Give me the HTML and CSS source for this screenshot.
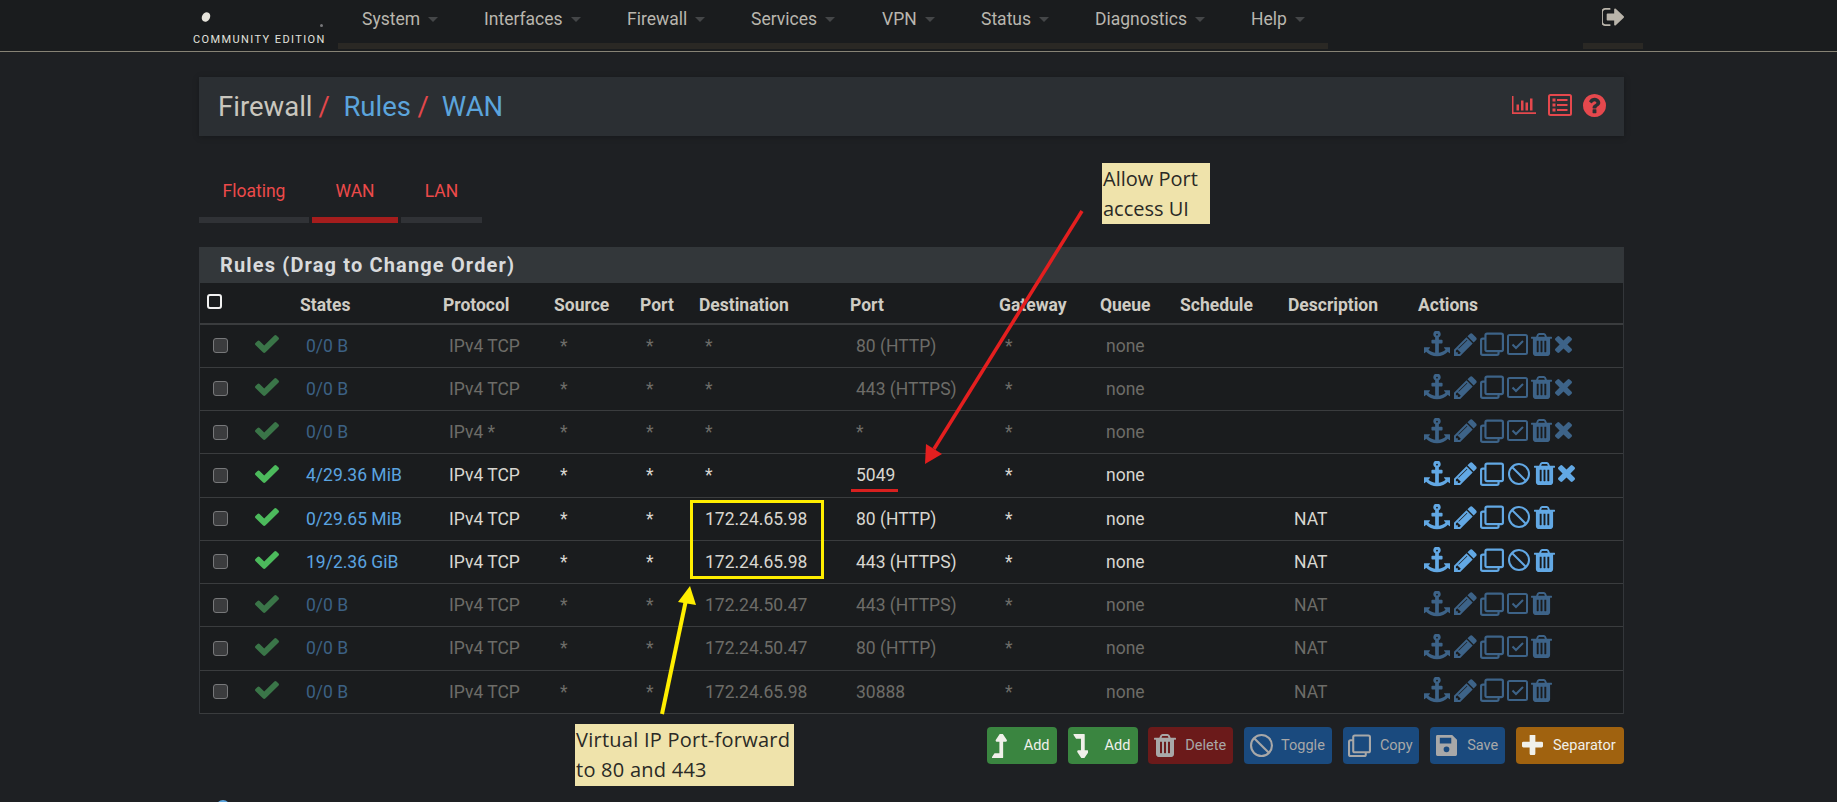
FILE: index.html
```html
<!DOCTYPE html>
<html lang="en">
<head>
<meta charset="utf-8">
<title>Firewall / Rules / WAN</title>
<link rel="stylesheet" href="styles.css">
</head>
<body>
<svg class="defs" width="0" height="0" aria-hidden="true">
  <symbol id="i-check" viewBox="121 334 1550 1188" preserveAspectRatio="none"><path d="M1671 566q0 40-28 68l-724 724-136 136q-28 28-68 28t-68-28l-136-136-362-362q-28-28-28-68t28-68l136-136q28-28 68-28t68 28l294 295 656-657q28-28 68-28t68 28l136 136q28 28 28 68z"/></symbol>
  <symbol id="i-anchor" viewBox="0 0 1792 1792"><path d="M960 256q0-26-19-45t-45-19-45 19-19 45 19 45 45 19 45-19 19-45zm832 888v352q0 22-20 30-8 2-12 2-12 0-23-9l-93-93q-119 143-318.500 226.500t-429.500 83.500-429.500-83.500-318.500-226.500l-93 93q-9 9-23 9-4 0-12-2-20-8-20-30v-352q0-14 9-23t23-9h352q22 0 30 20 8 19-7 35l-100 100q67 91 189.500 153.500t271.500 82.500v-647h-192q-26 0-45-19t-19-45v-128q0-26 19-45t45-19h192v-163q-58-34-93-92.500t-35-128.500q0-106 75-181t181-75 181 75 75 181q0 70-35 128.500t-93 92.500v163h192q26 0 45 19t19 45v128q0 26-19 45t-45 19h-192v647q149-20 271.500-82.500t189.500-153.500l-100-100q-15-16-7-35 8-20 30-20h352q14 0 23 9t9 23z"/></symbol>
  <symbol id="i-pencil" viewBox="128 128 1536 1536"><path d="M491 1536l91-91-235-235-91 91v107h128v128h107zm523-928q0-22-22-22-10 0-17 7l-542 542q-7 7-7 17 0 22 22 22 10 0 17-7l542-542q7-7 7-17zm-54-192l416 416-832 832h-416v-416zm683 96q0 53-37 90l-166 166-416-416 166-165q36-38 90-38 53 0 91 38l235 234q37 39 37 91z"/></symbol>
  <symbol id="i-clone" viewBox="1 1 22 22"><path class="ln" d="M7.500 2.500h13a1.500 1.500 0 0 1 1.500 1.500v13a1.500 1.500 0 0 1-1.500 1.500h-13a1.500 1.500 0 0 1-1.500-1.500v-13a1.500 1.500 0 0 1 1.500-1.500z"/><path class="ln" d="M6 7h-2.500a1.500 1.500 0 0 0-1.500 1.500v12a1.500 1.500 0 0 0 1.500 1.500h13a1.500 1.500 0 0 0 1.500-1.500v-2"/></symbol>
  <symbol id="i-checkbox" viewBox="1.500 2.500 21 21"><rect class="ln" x="2.500" y="3.500" width="19" height="19" rx="1.500"/><path class="ln" d="M7 13l3.500 3.500 7-7"/></symbol>
  <symbol id="i-trash" viewBox="192 128 1408 1536" preserveAspectRatio="none"><path d="M704 1376v-704q0-14-9-23t-23-9h-64q-14 0-23 9t-9 23v704q0 14 9 23t23 9h64q14 0 23-9t9-23zm256 0v-704q0-14-9-23t-23-9h-64q-14 0-23 9t-9 23v704q0 14 9 23t23 9h64q14 0 23-9t9-23zm256 0v-704q0-14-9-23t-23-9h-64q-14 0-23 9t-9 23v704q0 14 9 23t23 9h64q14 0 23-9t9-23zm-544-992h448l-48-117q-7-9-17-11h-317q-10 2-17 11zm928 32v64q0 14-9 23t-23 9h-96v948q0 83-47 143.500t-113 60.500h-832q-66 0-113-58.500t-47-141.500v-952h-96q-14 0-23-9t-9-23v-64q0-14 9-23t23-9h309l70-167q15-37 54-63t79-26h320q40 0 79 26t54 63l70 167h309q14 0 23 9t9 23z"/></symbol>
  <symbol id="i-times" viewBox="302 366 1188 1188"><path d="M1490 1322q0 40-28 68l-136 136q-28 28-68 28t-68-28l-294-294-294 294q-28 28-68 28t-68-28l-136-136q-28-28-28-68t28-68l294-294-294-294q-28-28-28-68t28-68l136-136q28-28 68-28t68 28l294 294 294-294q28-28 68-28t68 28l136 136q28 28 28 68t-28 68l-294 294 294 294q28 28 28 68z"/></symbol>
  <symbol id="i-ban" viewBox="1 1 22 22"><circle class="ln" cx="12" cy="12" r="10"/><path class="ln" d="M5 5l14 14"/></symbol>
  <symbol id="i-plus" viewBox="192 192 1408 1408"><path d="M1600 736v192q0 40-28 68t-68 28h-416v416q0 40-28 68t-68 28h-192q-40 0-68-28t-28-68v-416h-416q-40 0-68-28t-28-68v-192q0-40 28-68t68-28h416v-416q0-40 28-68t68-28h192q40 0 68 28t28 68v416h416q40 0 68 28t28 68z"/></symbol>
  <symbol id="i-up" viewBox="384 125 1024 1315" preserveAspectRatio="none"><path d="M1395 508q-18 36-58 36h-192v864q0 14-9 23t-23 9h-704q-21 0-29-18-8-20 4-35l160-192q9-11 25-11h320v-640h-192q-40 0-58-36-17-37 9-68l320-384q18-22 49-22t49 22l320 384q27 32 9 68z"/></symbol>
  <symbol id="i-down" viewBox="384 160 1024 1315" preserveAspectRatio="none"><path d="M448 160h704q14 0 23 9t9 23v864h192q40 0 58 37t-9 68l-320 384q-18 22-49 22t-49-22l-320-384q-26-31-9-68 18-37 58-37h192v-640h-320q-14 0-25-11l-160-192q-13-14-4-34 9-19 29-19z"/></symbol>
  <symbol id="i-save" viewBox="1 1 22 22"><path fill-rule="evenodd" d="M3 1h15l5 5v15.500a1.500 1.500 0 0 1-1.500 1.500h-19a1.500 1.500 0 0 1-1.500-1.500v-19a1.500 1.500 0 0 1 1.500-1.500zm2 3v6h12v-6zm7 9a3 3 0 1 0 0 6 3 3 0 0 0 0-6z"/></symbol>
  <symbol id="i-chart" viewBox="0 0 24 18"><path d="M0 0h1.500v16.300h22.500v1.700h-24zM4.500 8.500h2.500v6h-2.500zM9 4.500h2.500v10h-2.500zM13.500 6.500h2.500v8h-2.500zM18 2.500h2.500v12h-2.500z"/></symbol>
  <symbol id="i-list" viewBox="0 0 24 22"><rect class="ln" x="1" y="1" width="22" height="20" rx="1.500"/><path d="M4.500 4.500h3v3h-3zM4.500 9.500h3v3h-3zM4.500 14.500h3v3h-3zM9 5h10.500v2h-10.500zM9 10h10.500v2h-10.500zM9 15h10.500v2h-10.500z"/></symbol>
  <symbol id="i-help" viewBox="128 128 1536 1536"><path d="M1024 1376v-192q0-14-9-23t-23-9h-192q-14 0-23 9t-9 23v192q0 14 9 23t23 9h192q14 0 23-9t9-23zm256-672q0-88-55.500-163t-138.500-116-170-41q-243 0-371 213-15 24 8 42l132 100q7 6 19 6 16 0 25-12 53-68 86-92 34-24 86-24 48 0 85.500 26t37.500 59q0 38-20 61t-68 45q-63 28-115.500 86.500t-52.500 125.500v36q0 14 9 23t23 9h192q14 0 23-9t9-23q0-19 21.500-49.500t54.500-49.500q32-18 49-28.500t46-35 44.500-48 28-60.500 12.500-81zm384 192q0 209-103 385.500t-279.500 279.500-385.500 103-385.500-103-279.500-279.500-103-385.500 103-385.500 279.500-279.500 385.500-103 385.500 103 279.500 279.500 103 385.500z"/></symbol>
  <symbol id="i-out" viewBox="128 256 1504 1280" preserveAspectRatio="none"><path d="M704 1440q0 4 1 20t.5 26.500-3 23.500-10 19.500-20.500 6.500h-320q-119 0-203.500-84.500t-84.500-203.500v-704q0-119 84.500-203.500t203.500-84.500h320q13 0 22.500 9.500t9.500 22.500q0 4 1 20t.5 26.500-3 23.500-10 19.500-20.500 6.500h-320q-66 0-113 47t-47 113v704q0 66 47 113t113 47h312l11.500 1 11.500 3 8 5.500 7 9 2 13.500zm928-544q0 26-19 45l-544 544q-19 19-45 19t-45-19-19-45v-288h-448q-26 0-45-19t-19-45v-384q0-26 19-45t45-19h448v-288q0-26 19-45t45-19 45 19l544 544q19 19 19 45z"/></symbol>
</svg>

<header class="navbar">
  <div class="brand">
    <span class="brand-mark"><span class="brand-dot"></span><span class="brand-speck"></span></span>
    <span class="brand-text">COMMUNITY EDITION</span>
  </div>
  <div class="nav-main">
    <nav class="nav-items">
      <a class="nav-item w-system">System<i class="caret"></i></a>
      <a class="nav-item w-interfaces">Interfaces<i class="caret"></i></a>
      <a class="nav-item w-firewall">Firewall<i class="caret"></i></a>
      <a class="nav-item w-services">Services<i class="caret"></i></a>
      <a class="nav-item w-vpn">VPN<i class="caret"></i></a>
      <a class="nav-item w-status">Status<i class="caret"></i></a>
      <a class="nav-item w-diagnostics">Diagnostics<i class="caret"></i></a>
      <a class="nav-item w-help">Help<i class="caret"></i></a>
    </nav>
  </div>
  <div class="nav-right"><svg class="logout"><use href="#i-out"/></svg></div>
</header>

<main class="page">
  <div class="crumbs">
    <h1 class="crumb-title"><span>Firewall</span><em>/</em><a>Rules</a><em>/</em><a>WAN</a></h1>
    <div class="crumb-icons">
      <svg class="ci-chart"><use href="#i-chart"/></svg>
      <svg class="ci-list"><use href="#i-list"/></svg>
      <svg class="ci-help"><use href="#i-help"/></svg>
    </div>
  </div>

  <div class="tabs">
    <a class="tab w-floating">Floating</a>
    <a class="tab tab-active w-wan">WAN</a>
    <a class="tab w-lan">LAN</a>
  </div>

  <section class="panel">
    <h2 class="panel-title">Rules (Drag to Change Order)</h2>
    <table class="rules">
      <colgroup>
        <col class="c-sel"><col class="c-ok"><col class="c-states"><col class="c-proto"><col class="c-src"><col class="c-sport"><col class="c-dest"><col class="c-dport"><col class="c-gw"><col class="c-queue"><col class="c-sched"><col class="c-desc"><col class="c-act">
      </colgroup>
      <thead>
        <tr>
          <th><span class="box box-head"></span></th><th></th><th>States</th><th>Protocol</th><th>Source</th><th>Port</th><th>Destination</th><th>Port</th><th>Gateway</th><th>Queue</th><th>Schedule</th><th>Description</th><th>Actions</th>
        </tr>
      </thead>
      <tbody>
        <tr class="off"><td><span class="box"></span></td><td><svg class="ok"><use href="#i-check"/></svg></td><td class="st">0/0 B</td><td>IPv4 TCP</td><td>*</td><td>*</td><td>*</td><td>80 (HTTP)</td><td>*</td><td>none</td><td></td><td></td><td><div class="acts"><svg class="a-anchor"><use href="#i-anchor"/></svg><svg class="a-pencil"><use href="#i-pencil"/></svg><svg class="a-clone"><use href="#i-clone"/></svg><svg class="a-box"><use href="#i-checkbox"/></svg><svg class="a-trash"><use href="#i-trash"/></svg><svg class="a-times"><use href="#i-times"/></svg></div></td></tr>
        <tr class="off"><td><span class="box"></span></td><td><svg class="ok"><use href="#i-check"/></svg></td><td class="st">0/0 B</td><td>IPv4 TCP</td><td>*</td><td>*</td><td>*</td><td>443 (HTTPS)</td><td>*</td><td>none</td><td></td><td></td><td><div class="acts"><svg class="a-anchor"><use href="#i-anchor"/></svg><svg class="a-pencil"><use href="#i-pencil"/></svg><svg class="a-clone"><use href="#i-clone"/></svg><svg class="a-box"><use href="#i-checkbox"/></svg><svg class="a-trash"><use href="#i-trash"/></svg><svg class="a-times"><use href="#i-times"/></svg></div></td></tr>
        <tr class="off"><td><span class="box"></span></td><td><svg class="ok"><use href="#i-check"/></svg></td><td class="st">0/0 B</td><td>IPv4 *</td><td>*</td><td>*</td><td>*</td><td>*</td><td>*</td><td>none</td><td></td><td></td><td><div class="acts"><svg class="a-anchor"><use href="#i-anchor"/></svg><svg class="a-pencil"><use href="#i-pencil"/></svg><svg class="a-clone"><use href="#i-clone"/></svg><svg class="a-box"><use href="#i-checkbox"/></svg><svg class="a-trash"><use href="#i-trash"/></svg><svg class="a-times"><use href="#i-times"/></svg></div></td></tr>
        <tr><td><span class="box"></span></td><td><svg class="ok"><use href="#i-check"/></svg></td><td class="st">4/29.36 MiB</td><td>IPv4 TCP</td><td>*</td><td>*</td><td>*</td><td>5049</td><td>*</td><td>none</td><td></td><td></td><td><div class="acts"><svg class="a-anchor"><use href="#i-anchor"/></svg><svg class="a-pencil"><use href="#i-pencil"/></svg><svg class="a-clone"><use href="#i-clone"/></svg><svg class="a-ban"><use href="#i-ban"/></svg><svg class="a-trash"><use href="#i-trash"/></svg><svg class="a-times"><use href="#i-times"/></svg></div></td></tr>
        <tr><td><span class="box"></span></td><td><svg class="ok"><use href="#i-check"/></svg></td><td class="st">0/29.65 MiB</td><td>IPv4 TCP</td><td>*</td><td>*</td><td>172.24.65.98</td><td>80 (HTTP)</td><td>*</td><td>none</td><td></td><td>NAT</td><td><div class="acts"><svg class="a-anchor"><use href="#i-anchor"/></svg><svg class="a-pencil"><use href="#i-pencil"/></svg><svg class="a-clone"><use href="#i-clone"/></svg><svg class="a-ban"><use href="#i-ban"/></svg><svg class="a-trash"><use href="#i-trash"/></svg></div></td></tr>
        <tr><td><span class="box"></span></td><td><svg class="ok"><use href="#i-check"/></svg></td><td class="st">19/2.36 GiB</td><td>IPv4 TCP</td><td>*</td><td>*</td><td>172.24.65.98</td><td>443 (HTTPS)</td><td>*</td><td>none</td><td></td><td>NAT</td><td><div class="acts"><svg class="a-anchor"><use href="#i-anchor"/></svg><svg class="a-pencil"><use href="#i-pencil"/></svg><svg class="a-clone"><use href="#i-clone"/></svg><svg class="a-ban"><use href="#i-ban"/></svg><svg class="a-trash"><use href="#i-trash"/></svg></div></td></tr>
        <tr class="off"><td><span class="box"></span></td><td><svg class="ok"><use href="#i-check"/></svg></td><td class="st">0/0 B</td><td>IPv4 TCP</td><td>*</td><td>*</td><td>172.24.50.47</td><td>443 (HTTPS)</td><td>*</td><td>none</td><td></td><td>NAT</td><td><div class="acts"><svg class="a-anchor"><use href="#i-anchor"/></svg><svg class="a-pencil"><use href="#i-pencil"/></svg><svg class="a-clone"><use href="#i-clone"/></svg><svg class="a-box"><use href="#i-checkbox"/></svg><svg class="a-trash"><use href="#i-trash"/></svg></div></td></tr>
        <tr class="off"><td><span class="box"></span></td><td><svg class="ok"><use href="#i-check"/></svg></td><td class="st">0/0 B</td><td>IPv4 TCP</td><td>*</td><td>*</td><td>172.24.50.47</td><td>80 (HTTP)</td><td>*</td><td>none</td><td></td><td>NAT</td><td><div class="acts"><svg class="a-anchor"><use href="#i-anchor"/></svg><svg class="a-pencil"><use href="#i-pencil"/></svg><svg class="a-clone"><use href="#i-clone"/></svg><svg class="a-box"><use href="#i-checkbox"/></svg><svg class="a-trash"><use href="#i-trash"/></svg></div></td></tr>
        <tr class="off"><td><span class="box"></span></td><td><svg class="ok"><use href="#i-check"/></svg></td><td class="st">0/0 B</td><td>IPv4 TCP</td><td>*</td><td>*</td><td>172.24.65.98</td><td>30888</td><td>*</td><td>none</td><td></td><td>NAT</td><td><div class="acts"><svg class="a-anchor"><use href="#i-anchor"/></svg><svg class="a-pencil"><use href="#i-pencil"/></svg><svg class="a-clone"><use href="#i-clone"/></svg><svg class="a-box"><use href="#i-checkbox"/></svg><svg class="a-trash"><use href="#i-trash"/></svg></div></td></tr>
      </tbody>
    </table>
  </section>

  <div class="buttons">
    <a class="btn btn-green w-add"><span class="ico"><svg class="bi-up"><use href="#i-up"/></svg></span>Add</a>
    <a class="btn btn-green w-add"><span class="ico"><svg class="bi-up"><use href="#i-down"/></svg></span>Add</a>
    <a class="btn btn-red dim w-del"><span class="ico"><svg class="bi-trash"><use href="#i-trash"/></svg></span>Delete</a>
    <a class="btn btn-blue dim w-tog"><span class="ico"><svg class="bi-ban"><use href="#i-ban"/></svg></span>Toggle</a>
    <a class="btn btn-blue dim w-cop"><span class="ico"><svg class="bi-clone"><use href="#i-clone"/></svg></span>Copy</a>
    <a class="btn btn-blue dim w-sav"><span class="ico"><svg class="bi-save"><use href="#i-save"/></svg></span>Save</a>
    <a class="btn btn-orange w-sep"><span class="ico"><svg class="bi-save"><use href="#i-plus"/></svg></span>Separator</a>
  </div>

  <div class="info-peek"></div>
</main>

<div class="note note-port">Allow Port<br>access UI</div>
<div class="note note-vip">Virtual IP Port-forward<br>to 80 and 443</div>
<div class="mark-box"></div>
<div class="mark-line"></div>
<svg class="overlay" width="1837" height="802" aria-hidden="true">
  <line x1="1082" y1="211" x2="934" y2="449" stroke="#e41f1f" stroke-width="3.500"/>
  <polygon points="925,464 926,444 942,454" fill="#e41f1f"/>
  <line x1="662" y1="714" x2="686" y2="600" stroke="#ffee00" stroke-width="4"/>
  <polygon points="690,586 678,602 696,605" fill="#ffee00"/>
</svg>
</body>
</html>
```
FILE: styles.css
```css
* { box-sizing: border-box; }
html, body { margin: 0; padding: 0; }
body {
  position: relative;
  width: 1837px;
  height: 802px;
  overflow: hidden;
  background: #1e2023;
  color: #d4d2cc;
  font-family: Roboto, "Liberation Sans", sans-serif;
  font-size: 17.5px;
}
.defs { position: absolute; }
.ln { fill: none; stroke: currentColor; stroke-width: 2; }

/* navbar */
.navbar {
  display: flex;
  height: 52px;
  background: #1a1c1e;
  border-bottom: 1px solid #878375;
  padding-left: 193px;
}
.brand { width: 145px; position: relative; height: 51px; }
.brand-mark { display: block; height: 33px; position: relative; }
.brand-dot {
  position: absolute; left: 9px; top: 12px; width: 8px; height: 10px;
  background: #e6e4dc; border-radius: 50%; transform: rotate(30deg);
}
.brand-speck {
  position: absolute; left: 127px; top: 24px; width: 3px; height: 3px;
  background: #77777a; border-radius: 50%;
}
.brand-text {
  display: block; font-size: 11px; letter-spacing: 1.400px; line-height: 13px;
  color: #e2e2de; white-space: nowrap;
}
.nav-main { width: 990px; height: 49px; border-bottom: 6px solid #2a2824; }
.nav-items { display: flex; height: 43px; padding-left: 24px; }
.nav-item {
  display: flex; align-items: center; height: 38px;
  font-size: 17.5px; color: #b9b6ae; white-space: nowrap;
}
.caret {
  display: inline-block; margin-left: 8px; margin-top: 1px;
  border-left: 5px solid transparent; border-right: 5px solid transparent;
  border-top: 5px solid #444648;
}
.w-system { width: 122px; }
.w-interfaces { width: 143px; }
.w-firewall { width: 124px; }
.w-services { width: 131px; }
.w-vpn { width: 99px; }
.w-status { width: 114px; }
.w-diagnostics { width: 156px; }
.nav-right {
  width: 60px; height: 49px; margin-left: 255px; border-bottom: 6px solid #2a2824;
  display: flex; justify-content: center;
}
.logout { width: 22px; height: 18px; margin-top: 8px; fill: #b9b4aa; }

/* page */
.page { padding: 25px 213px 0 199px; }
.crumbs {
  display: flex; align-items: center; justify-content: space-between;
  height: 59px; padding: 0 18px 0 19px;
  background: #2b2f33;
  box-shadow: 0 1px 6px rgba(0,0,0,.25);
}
.crumb-title {
  display: flex; margin: 0; font-size: 27.5px; font-weight: 400; color: #c9c6be;
}
.crumb-title em { font-style: normal; color: #e2474b; margin: 0 13.500px 0 6px; }
.crumb-title a { color: #5ba4dc; }
.crumb-title a + em { margin-left: 6.500px; margin-right: 13px; }
.crumb-icons { display: flex; gap: 11.500px; align-items: center; margin-top: -3px; fill: #e5484d; color: #e5484d; }
.ci-chart { width: 24px; height: 18px; }
.ci-list { width: 24px; height: 22px; }
.ci-help { width: 23px; height: 23px; }

/* tabs */
.tabs { display: flex; gap: 3px; margin-top: 39px; }
.tab {
  display: block; height: 48px; padding-top: 6px;
  text-align: center; font-size: 17.5px; color: #ec4a4a;
  border-bottom: 6px solid #303236;
}
.tab-active { border-bottom-color: #a51d1d; }
.w-floating { width: 110px; }
.w-wan { width: 86px; }
.w-lan { width: 81px; }

/* panel */
.panel { margin-top: 24px; background: #1a1c1e; border: 1px solid #33363a; border-top: 0; height: 467px; }
.panel-title {
  margin: 0; height: 36px; padding-left: 20px; line-height: 36px;
  background: #33373a; color: #d8dadc; font-size: 20px; font-weight: 700; letter-spacing: 1.150px;
  white-space: nowrap;
}
.rules { width: 1423px; table-layout: fixed; border-collapse: collapse; }
.c-sel { width: 45px; } .c-ok { width: 55px; } .c-states { width: 143px; } .c-proto { width: 111px; }
.c-src { width: 86px; } .c-sport { width: 59px; } .c-dest { width: 151px; } .c-dport { width: 149px; }
.c-gw { width: 101px; } .c-queue { width: 80px; } .c-sched { width: 108px; } .c-desc { width: 130px; } .c-act { width: 205px; }
.rules th {
  height: 41px; padding: 3px 0 0; text-align: left; font-size: 17.5px; font-weight: 700;
  color: #cfccc4; border-bottom: 2px solid #3a3c3e; white-space: nowrap;
}
.rules th:first-child { padding-left: 7px; }
.rules td {
  height: 43.250px; padding: 0 0 0 6px; color: #d8d6d0; border-bottom: 1px solid #3a3c3e; white-space: nowrap;
}
.rules td:first-child { padding-left: 13px; }
.rules tr.off td { color: #6d6c68; }
.rules td.st { color: #5ba4e0; }
.rules tr.off td.st { color: #3c6184; }
.box {
  display: block; width: 15px; height: 15px; border-radius: 3px;
  background: #3b3c3e; border: 1px solid #77787a;
}
.box-head { background: #1a1c1e; border: 2px solid #f2f2f2; margin-top: -6px; }
.ok { display: block; width: 24px; height: 18px; margin-top: -3px; margin-left: 4px; fill: #4cba5c; }
.off .ok { fill: #3a7548; }
.acts { display: flex; align-items: center; gap: 3px; margin-top: -3px; color: #62a8e4; fill: #62a8e4; }
.off .acts { color: #3d6388; fill: #3d6388; }
.a-anchor { width: 26px; height: 26px; flex: none; margin-right: 1px; }
.a-pencil { width: 23px; height: 23px; flex: none; }
.a-clone { width: 24px; height: 24px; flex: none; }
.a-box { width: 21px; height: 21px; flex: none; }
.a-ban { width: 22px; height: 22px; flex: none; margin: 0 1px; }
.a-trash { width: 21px; height: 23px; flex: none; }
.a-times { width: 17px; height: 17px; flex: none; }

/* buttons */
.buttons { display: flex; justify-content: flex-end; gap: 10.800px; margin-top: 13px; }
.btn {
  display: flex; align-items: center; height: 37px; padding-left: 5.500px;
  border-radius: 4px; font-size: 14.500px; color: #f0f0ea; fill: #f0f0ea; white-space: nowrap;
}
.ico { display: flex; align-items: center; width: 31.500px; flex: none; }
.bi-up { width: 15px; height: 24px; }
.bi-trash { width: 22px; height: 23px; }
.bi-ban { width: 23px; height: 23px; }
.bi-clone { width: 23px; height: 23px; }
.bi-save { width: 21px; height: 21px; }
.w-add { width: 70px; }
.w-del { width: 85px; }
.w-tog { width: 88px; }
.w-cop { width: 76.500px; }
.w-sav { width: 75px; }
.w-sep { width: 108px; }
.btn-green { background: #3a8540; }
.btn-red { background: #6b1a1a; }
.btn-blue { background: #1a4a7e; }
.btn-orange { background: #a0620f; }
.dim { color: #a8a8a8; fill: #a8a8a8; }

.info-peek {
  position: absolute; left: 216px; top: 800px; width: 14px; height: 14px;
  border-radius: 50%; border: 2px solid #5ba4dc;
}

/* annotations */
.note {
  position: absolute; background: #efe3ab; color: #2a2a26; font-family: "Open Sans", sans-serif;
  font-size: 20px; line-height: 29.500px; padding: 1px 1px 0; white-space: nowrap;
}
.note-port { left: 1102px; top: 163px; width: 108px; height: 61px; }
.note-vip { left: 575px; top: 724px; width: 219px; height: 62px; letter-spacing: .25px; }
.mark-box { position: absolute; left: 690px; top: 500px; width: 134px; height: 79px; border: 3px solid #ffee00; }
.mark-line { position: absolute; left: 851px; top: 489px; width: 47px; height: 3px; background: #d8201f; }
.overlay { position: absolute; left: 0; top: 0; pointer-events: none; }
```
